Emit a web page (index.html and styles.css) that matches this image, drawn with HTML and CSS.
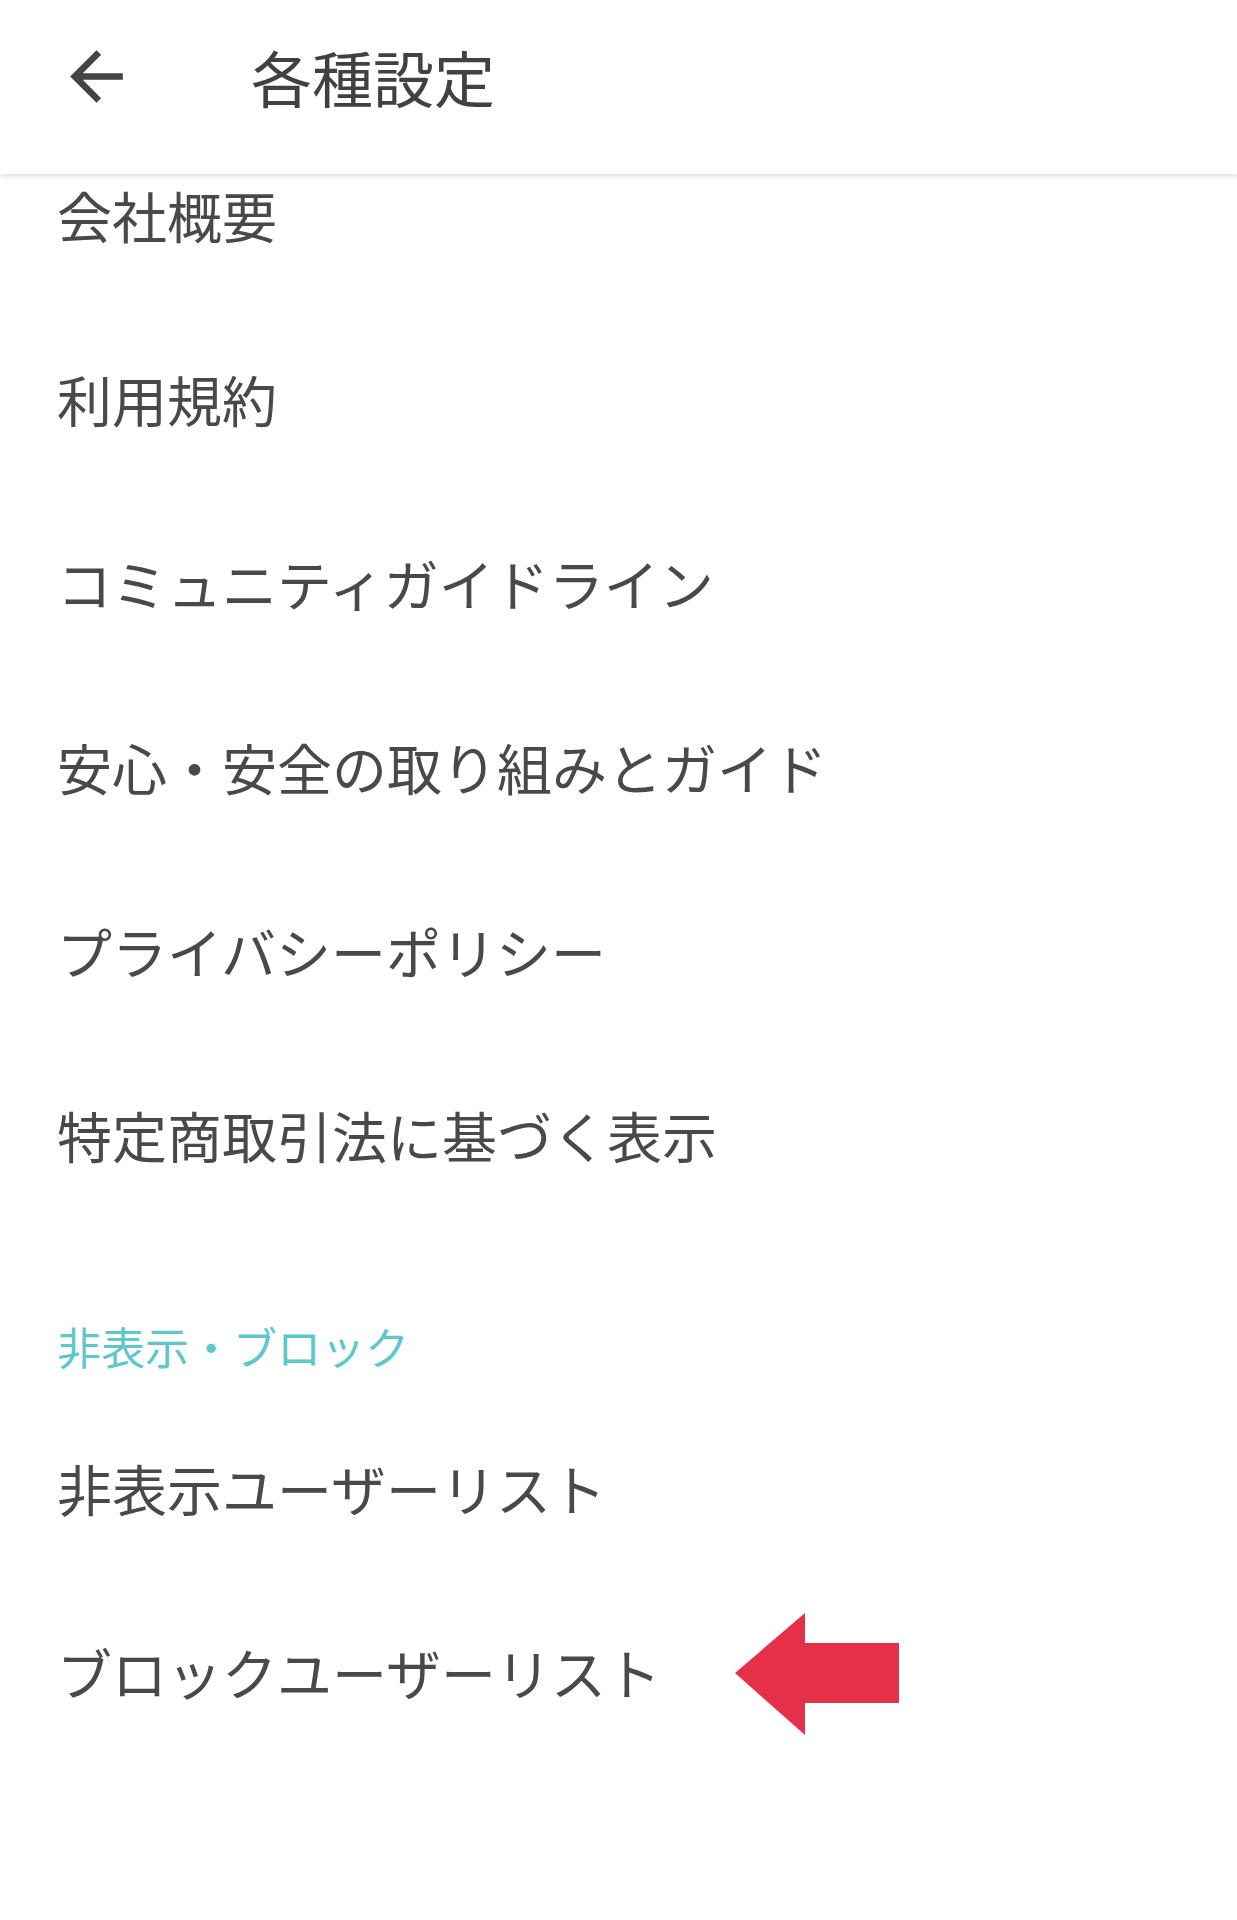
FILE: index.html
```html
<!DOCTYPE html>
<html lang="ja">
<head>
<meta charset="utf-8">
<title>各種設定</title>
<link rel="stylesheet" href="styles.css">
</head>
<body>
<div class="screen">
  <header class="topbar">
    <button class="back" aria-label="戻る">
      <svg viewBox="0 0 24 24" width="79" height="79"><path d="M20 11H7.83l5.59-5.59L12 4l-8 8 8 8 1.41-1.41L7.83 13H20v-2z" fill="#444"/></svg>
    </button>
    <h1 class="title">各種設定</h1>
  </header>
  <main class="list">
    <div class="row">会社概要</div>
    <div class="row">利用規約</div>
    <div class="row">コミュニティガイドライン</div>
    <div class="row">安心・安全の取り組みとガイド</div>
    <div class="row">プライバシーポリシー</div>
    <div class="row">特定商取引法に基づく表示</div>
    <div class="section">非表示・ブロック</div>
    <div class="row">非表示ユーザーリスト</div>
    <div class="row">ブロックユーザーリスト
      <svg class="pointer" viewBox="0 0 164 122" width="164" height="122"><polygon points="0,60 70,0 70,30 164,30 164,90 70,90 70,122" fill="#e5304a"/></svg>
    </div>
  </main>
</div>
</body>
</html>
```
FILE: styles.css
```css
* { box-sizing: border-box; }
html, body { margin: 0; padding: 0; background: #fff; }
body {
  font-family: "Noto Sans CJK JP", "Noto Sans", sans-serif;
  color: #48494b;
}
.screen {
  width: 1237px;
  min-height: 1920px;
  overflow: hidden;
  background: #fff;
}
.topbar {
  position: relative;
  z-index: 2;
  height: 174px;
  background: #fff;
  display: flex;
  align-items: center;
  box-shadow: 0 2px 5px rgba(0, 0, 0, 0.14);
  padding-bottom: 22px;
}
.back {
  border: 0;
  background: none;
  padding: 0;
  margin-left: 57px;
  width: 79px;
  height: 79px;
  display: flex;
}
.title {
  margin: 0 0 0 115px;
  font-size: 61px;
  font-weight: 400;
  color: #404143;
  line-height: 1;
}
.list {
  position: relative;
  z-index: 1;
  margin-top: -52px;
}
.row {
  height: 184px;
  display: flex;
  align-items: center;
  padding-left: 57px;
  font-size: 55px;
  line-height: 1;
}
.section {
  height: 169px;
  padding: 98px 0 0 57px;
  font-size: 44px;
  line-height: 1;
  color: #5ec7cc;
}
.pointer {
  margin-left: 74px;
  margin-top: 6px;
}
```
